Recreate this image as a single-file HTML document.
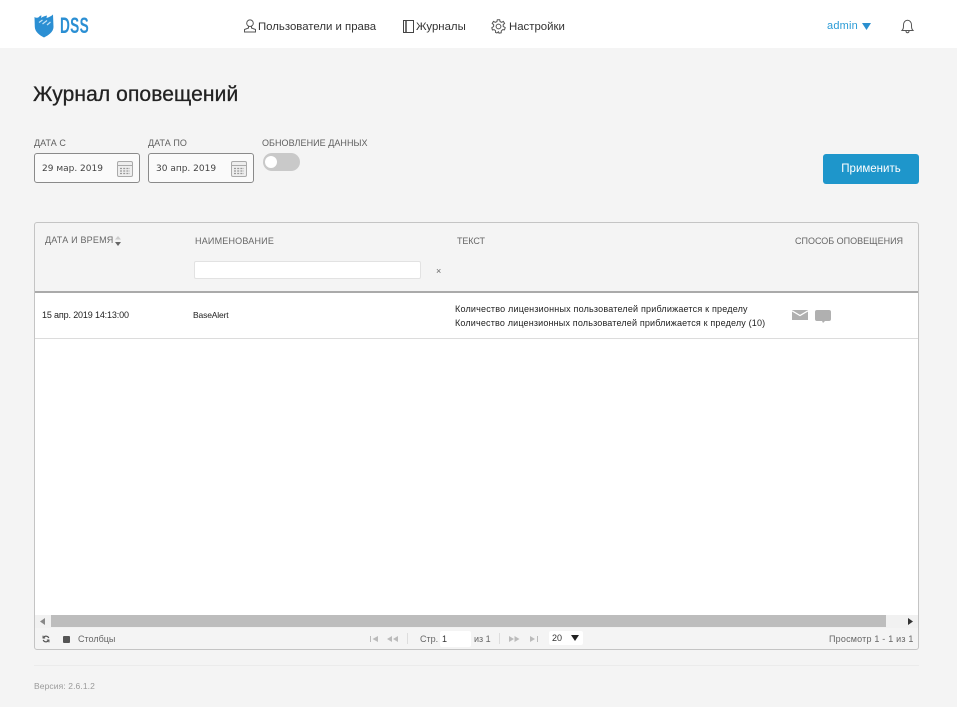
<!DOCTYPE html>
<html lang="ru">
<head>
<meta charset="utf-8">
<title>Журнал оповещений</title>
<style>
html,body{margin:0;padding:0}
body{width:957px;height:707px;overflow:hidden;background:#f4f4f4;font-family:"Liberation Sans",sans-serif;position:relative;color:#222}
.a{position:absolute;white-space:nowrap}
svg{position:absolute;overflow:visible}
.lbl{font-size:9px;line-height:12px;color:#5f5f5f;letter-spacing:.05px}
.nav{font-size:11.4px;line-height:16px;color:#333}
.inp{position:absolute;box-sizing:border-box;background:#fafafa;border:1px solid #8a8a8a;border-radius:3px;height:30px;width:106px;top:153px}
.dv{font-family:"DejaVu Sans",sans-serif;font-size:9px;line-height:12px;color:#444}
.th{font-size:9px;line-height:12px;color:#666;letter-spacing:.2px}
.td{font-size:9px;line-height:12px;color:#222}
.ft{font-size:9px;line-height:12px;color:#666}
</style>
</head>
<body>
<div class="a" style="left:0;top:0;width:957px;height:48px;background:#fff"></div>

<svg style="left:34px;top:14px" width="20" height="24" viewBox="0 0 20 24"><path d="M0.5 3 C2 4 3.5 4 5 3 C5.5 2 6.5 1.5 7.5 1.5 L7 4 C9 2.5 11 2 13 1.5 L12.5 4 C15 3.2 17.5 2 19 0.5 L19.5 13 C19.5 18 14 21.5 10 23.5 C6 21.5 1 18 0.8 13 Z" fill="#2b8fd3"/><path d="M5 8.5 L8.5 6 M8.5 10 L13 6.5 M13 11 L16.5 8" stroke="#bfe0f5" stroke-width="1.3" fill="none"/></svg>
<div class="a" style="left:60px;top:13px;font-size:22px;line-height:26px;font-weight:bold;color:#2b8fd3;transform:scaleX(.62);transform-origin:0 0;letter-spacing:.5px">DSS</div>

<svg style="left:243px;top:19px" width="14" height="14" viewBox="0 0 14 14" fill="none" stroke="#555" stroke-width="1"><circle cx="7" cy="4.2" r="3.3"/><path d="M5.5 7.5 V9 L1.5 10.5 V13 H12.5 V10.5 L8.5 9 V7.5"/></svg>
<div class="a nav" style="left:258px;top:19px">Пользователи и права</div>
<svg style="left:403px;top:20px" width="11" height="13" viewBox="0 0 11 13" fill="none" stroke="#444" stroke-width="1"><rect x=".5" y=".5" width="10" height="12"/><path d="M3 .5 V12.5" stroke-width="1.5"/></svg>
<div class="a nav" style="left:416px;top:19px">Журналы</div>
<svg style="left:491px;top:19px" width="15" height="15" viewBox="0 0 15 15" fill="none" stroke="#555" stroke-width="1"><circle cx="7.5" cy="7.5" r="2.4"/><path d="M6.3 .8 H8.7 L9.1 2.6 L10.7 3.3 L12.3 2.4 L13.6 4.4 L12.2 5.6 V7.5 L14.2 8.6 L13.5 10.8 L11.6 10.6 L10.3 12 L10.2 13.8 L8 14.2 L7.5 12.8 L5.9 13.9 L4.5 13.4 L4.6 11.8 L3.2 10.6 L1.4 10.9 L.8 8.7 L2.6 7.5 L2.7 5.7 L1.2 4.4 L2.5 2.4 L4.3 3.3 L5.9 2.6 Z"/></svg>
<div class="a nav" style="left:509px;top:19px">Настройки</div>

<div class="a" style="left:827px;top:19px;font-size:11px;line-height:14px;color:#2a9bd6;letter-spacing:.2px">admin</div>
<svg style="left:862px;top:23px" width="9" height="7" viewBox="0 0 9 7"><path d="M0 0 H9 L4.5 7 Z" fill="#2a8fcf"/></svg>
<svg style="left:901px;top:19px" width="13" height="15" viewBox="0 0 13 15" fill="none" stroke="#555" stroke-width="1"><path d="M1 11.5 C2.5 10 2.5 8.5 2.5 6 C2.5 3.2 4.3 1.2 6.5 1.2 C8.7 1.2 10.5 3.2 10.5 6 C10.5 8.5 10.5 10 12 11.5 Z"/><path d="M5 12 C5 14.3 8 14.3 8 12"/></svg>

<div class="a" style="left:33px;top:81px;font-size:21px;line-height:28px;color:#222;letter-spacing:.1px;-webkit-text-stroke:.3px #222">Журнал оповещений</div>

<div class="a lbl" style="left:34px;top:137px">ДАТА С</div>
<div class="a lbl" style="left:148px;top:137px">ДАТА ПО</div>
<div class="a lbl" style="left:262px;top:137px">ОБНОВЛЕНИЕ ДАННЫХ</div>

<div class="inp" style="left:34px"></div>
<div class="a dv" style="left:42px;top:163px">29 мар. 2019</div>
<svg style="left:117px;top:161px" width="16" height="16" viewBox="0 0 16 16"><rect x=".5" y=".5" width="15" height="15" rx="1.5" fill="#eee" stroke="#aaa"/><path d="M.5 4.5 H15.5" stroke="#aaa"/><path d="M3 7.5 H13 M3 10 H13 M3 12.5 H13" stroke="#999" stroke-width="1.3" stroke-dasharray="2 1.2"/></svg>
<div class="inp" style="left:148px"></div>
<div class="a dv" style="left:156px;top:163px">30 апр. 2019</div>
<svg style="left:231px;top:161px" width="16" height="16" viewBox="0 0 16 16"><rect x=".5" y=".5" width="15" height="15" rx="1.5" fill="#eee" stroke="#aaa"/><path d="M.5 4.5 H15.5" stroke="#aaa"/><path d="M3 7.5 H13 M3 10 H13 M3 12.5 H13" stroke="#999" stroke-width="1.3" stroke-dasharray="2 1.2"/></svg>

<div class="a" style="left:263px;top:153px;width:37px;height:18px;border-radius:9px;background:#c9c9c9"></div>
<div class="a" style="left:265px;top:156px;width:12px;height:12px;border-radius:50%;background:#fff"></div>

<div class="a" style="left:823px;top:154px;width:96px;height:30px;background:#1e96cb;border-radius:3px;color:#fff;font-size:11.5px;line-height:30px;text-align:center">Применить</div>

<!-- Grid -->
<div class="a" style="left:34px;top:222px;width:885px;height:428px;box-sizing:border-box;border:1px solid #c4c4c4;border-radius:3px;background:#f4f4f4"></div>
<div class="a th" style="left:45px;top:234px">ДАТА И ВРЕМЯ</div>
<svg style="left:115px;top:236px" width="6" height="10" viewBox="0 0 6 10"><path d="M3 0 L6 3.5 H0 Z" fill="#ccc"/><path d="M3 10 L6 6 H0 Z" fill="#666"/></svg>
<div class="a th" style="left:195px;top:235px">НАИМЕНОВАНИЕ</div>
<div class="a th" style="left:457px;top:235px;letter-spacing:-.1px">ТЕКСТ</div>
<div class="a th" style="left:795px;top:235px;letter-spacing:0">СПОСОБ ОПОВЕЩЕНИЯ</div>
<div class="a" style="left:194px;top:261px;width:227px;height:18px;box-sizing:border-box;background:#fff;border:1px solid #e2e2e2;border-radius:2px"></div>
<div class="a" style="left:436px;top:265px;font-size:9px;line-height:12px;color:#666">×</div>

<div class="a" style="left:35px;top:291px;width:883px;height:2px;background:#aaa"></div>
<div class="a" style="left:35px;top:293px;width:883px;height:322px;background:#fff"></div>
<div class="a" style="left:35px;top:338px;width:883px;height:1px;background:#dcdcdc"></div>

<div class="a td" style="left:42px;top:309px;letter-spacing:-.15px">15 апр. 2019 14:13:00</div>
<div class="a td" style="left:193px;top:309px;font-size:8.5px;letter-spacing:-.15px">BaseAlert</div>
<div class="a td" style="left:455px;top:303px;letter-spacing:.2px">Количество лицензионных пользователей приближается к пределу</div>
<div class="a td" style="left:455px;top:317px;letter-spacing:.17px">Количество лицензионных пользователей приближается к пределу (10)</div>

<svg style="left:792px;top:310px" width="16" height="10" viewBox="0 0 16 10"><rect width="16" height="10" fill="#b0b0b0"/><path d="M0 .8 L8 5.5 L16 .8" fill="none" stroke="#fff" stroke-width="1.2"/></svg>
<svg style="left:815px;top:310px" width="16" height="14" viewBox="0 0 16 14"><path d="M2 0 H14 A2 2 0 0 1 16 2 V9 A2 2 0 0 1 14 11 H10 L8 13 L7 11 H2 A2 2 0 0 1 0 9 V2 A2 2 0 0 1 2 0 Z" fill="#b0b0b0"/></svg>

<!-- Scrollbar -->
<div class="a" style="left:35px;top:615px;width:883px;height:13px;background:#f1f1f1"></div>
<div class="a" style="left:51px;top:615px;width:835px;height:12px;background:#bdbdbd"></div>
<svg style="left:40px;top:618px" width="5" height="7" viewBox="0 0 5 7"><path d="M5 0 V7 L0 3.5 Z" fill="#888"/></svg>
<svg style="left:908px;top:618px" width="5" height="7" viewBox="0 0 5 7"><path d="M0 0 V7 L5 3.5 Z" fill="#333"/></svg>

<!-- Pager -->
<svg style="left:42px;top:635px" width="8" height="8" viewBox="0 0 8 8" fill="none" stroke="#555" stroke-width="1.2"><path d="M6.8 3 A3 3 0 0 0 1.6 2.4 M1.2 5 A3 3 0 0 0 6.4 5.6"/><path d="M1 .6 V3 H3.2 M7 7.4 V5 H4.8" stroke-width=".9"/></svg>
<div class="a" style="left:63px;top:636px;width:7px;height:7px;background:#555;border-radius:1px"></div>
<div class="a ft" style="left:78px;top:633px">Столбцы</div>

<svg style="left:370px;top:636px" width="28" height="6" viewBox="0 0 28 6" fill="#bbb"><path d="M0 0 H1 V6 H0 Z M8 0 V6 L2.5 3 Z M17 3 L22 0 V6 Z M23 3 L28 0 V6 Z"/></svg>
<div class="a" style="left:407px;top:633px;width:1px;height:11px;background:#ddd"></div>
<div class="a ft" style="left:420px;top:633px">Стр.</div>
<div class="a" style="left:440px;top:631px;width:31px;height:16px;background:#fff;border-radius:2px"></div>
<div class="a ft" style="left:442px;top:633px;color:#333">1</div>
<div class="a ft" style="left:474px;top:633px">из 1</div>
<div class="a" style="left:499px;top:633px;width:1px;height:11px;background:#ddd"></div>
<svg style="left:509px;top:636px" width="30" height="6" viewBox="0 0 30 6" fill="#bbb"><path d="M0 0 L5 3 L0 6 Z M5.5 0 L10.5 3 L5.5 6 Z M21 0 L26 3 L21 6 Z M28 0 H29 V6 H28 Z"/></svg>
<div class="a" style="left:549px;top:631px;width:34px;height:14px;background:#fff;border-radius:2px"></div>
<div class="a ft" style="left:552px;top:632px;color:#333">20</div>
<svg style="left:571px;top:635px" width="8" height="6" viewBox="0 0 8 6"><path d="M0 0 H8 L4 6 Z" fill="#222"/></svg>
<div class="a ft" style="left:829px;top:633px;letter-spacing:.2px">Просмотр 1 - 1 из 1</div>

<div class="a" style="left:34px;top:665px;width:885px;height:1px;background:#ebebeb"></div>
<div class="a" style="left:34px;top:680px;font-size:8.5px;line-height:12px;color:#9a9a9a;letter-spacing:.1px">Версия: 2.6.1.2</div>
</body>
</html>
